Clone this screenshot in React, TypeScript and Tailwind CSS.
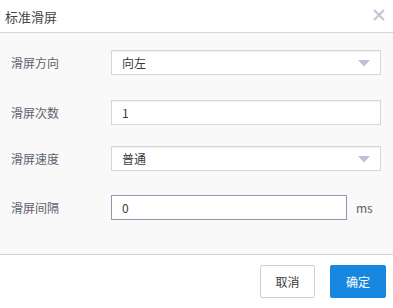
import React from "react";

const font = { fontFamily: '"Noto Sans CJK SC", "Liberation Sans", sans-serif' };

const Caret: React.FC = () => (
  <svg width="12" height="7" viewBox="0 0 12 7" className="absolute right-[10px] top-[9px]">
    <path d="M0 0 L12 0 L6 6.5 Z" fill="#b9c3d3" />
  </svg>
);

const Row: React.FC<{ label: string; className?: string; children: React.ReactNode }> = ({
  label,
  className,
  children,
}) => (
  <div className={`flex items-center h-[25px] ${className ?? ""}`}>
    <div className="w-[111px] pl-[11px] text-[12px] text-[#5d636d]">{label}</div>
    {children}
  </div>
);

const App: React.FC = () => {
  return (
    <div className="w-[393px] h-[308px] bg-white flex flex-col" style={font}>
      {/* Header */}
      <div className="h-[33px] border-b border-[#d4d4d4] flex items-center justify-between pl-[5px] pr-[8px]">
        <span className="text-[13px] text-[#444] leading-none">标准滑屏</span>
        <svg width="12" height="12" viewBox="0 0 12 12" className="-mt-[2px]">
          <path d="M1 1 L11 11 M11 1 L1 11" stroke="#bcc5d2" strokeWidth="2" />
        </svg>
      </div>

      {/* Body */}
      <div className="h-[222px] bg-[#f9f9f9] border-b border-[#d4d4d4] pt-[17px] flex flex-col">
        <Row label="滑屏方向">
          <div className="relative w-[270px] h-[25px] bg-white border border-[#d6d6d6] shadow-[inset_0_1px_1px_rgba(0,0,0,0.06)] flex items-center pl-[10px] text-[12px] text-[#3a3a3a]">
            向左
            <Caret />
          </div>
        </Row>
        <Row label="滑屏次数" className="mt-[25px]">
          <div className="w-[270px] h-[25px] bg-white border border-[#d6d6d6] shadow-[inset_0_1px_1px_rgba(0,0,0,0.06)] flex items-center pl-[10px] text-[12px] text-[#3a3a3a]">
            1
          </div>
        </Row>
        <Row label="滑屏速度" className="mt-[21px]">
          <div className="relative w-[270px] h-[25px] bg-white border border-[#d6d6d6] shadow-[inset_0_1px_1px_rgba(0,0,0,0.06)] flex items-center pl-[10px] text-[12px] text-[#3a3a3a]">
            普通
            <Caret />
          </div>
        </Row>
        <Row label="滑屏间隔" className="mt-[24px]">
          <div className="w-[236px] h-[25px] bg-white border border-[#8d9ab0] flex items-center pl-[10px] text-[12px] text-[#3a3a3a]">
            0
          </div>
          <span className="ml-[9px] text-[12px] text-[#5d636d]">ms</span>
        </Row>
      </div>

      {/* Footer */}
      <div className="flex justify-end gap-[15px] pt-[10px] pr-[7px]">
        <button className="w-[55px] h-[33px] bg-white border border-[#cfcfcf] rounded-[2px] text-[12px] text-[#3a3a3a]">
          取消
        </button>
        <button className="w-[56px] h-[33px] bg-[#1787e0] rounded-[2px] text-[12px] text-white">
          确定
        </button>
      </div>
    </div>
  );
};

export default App;
